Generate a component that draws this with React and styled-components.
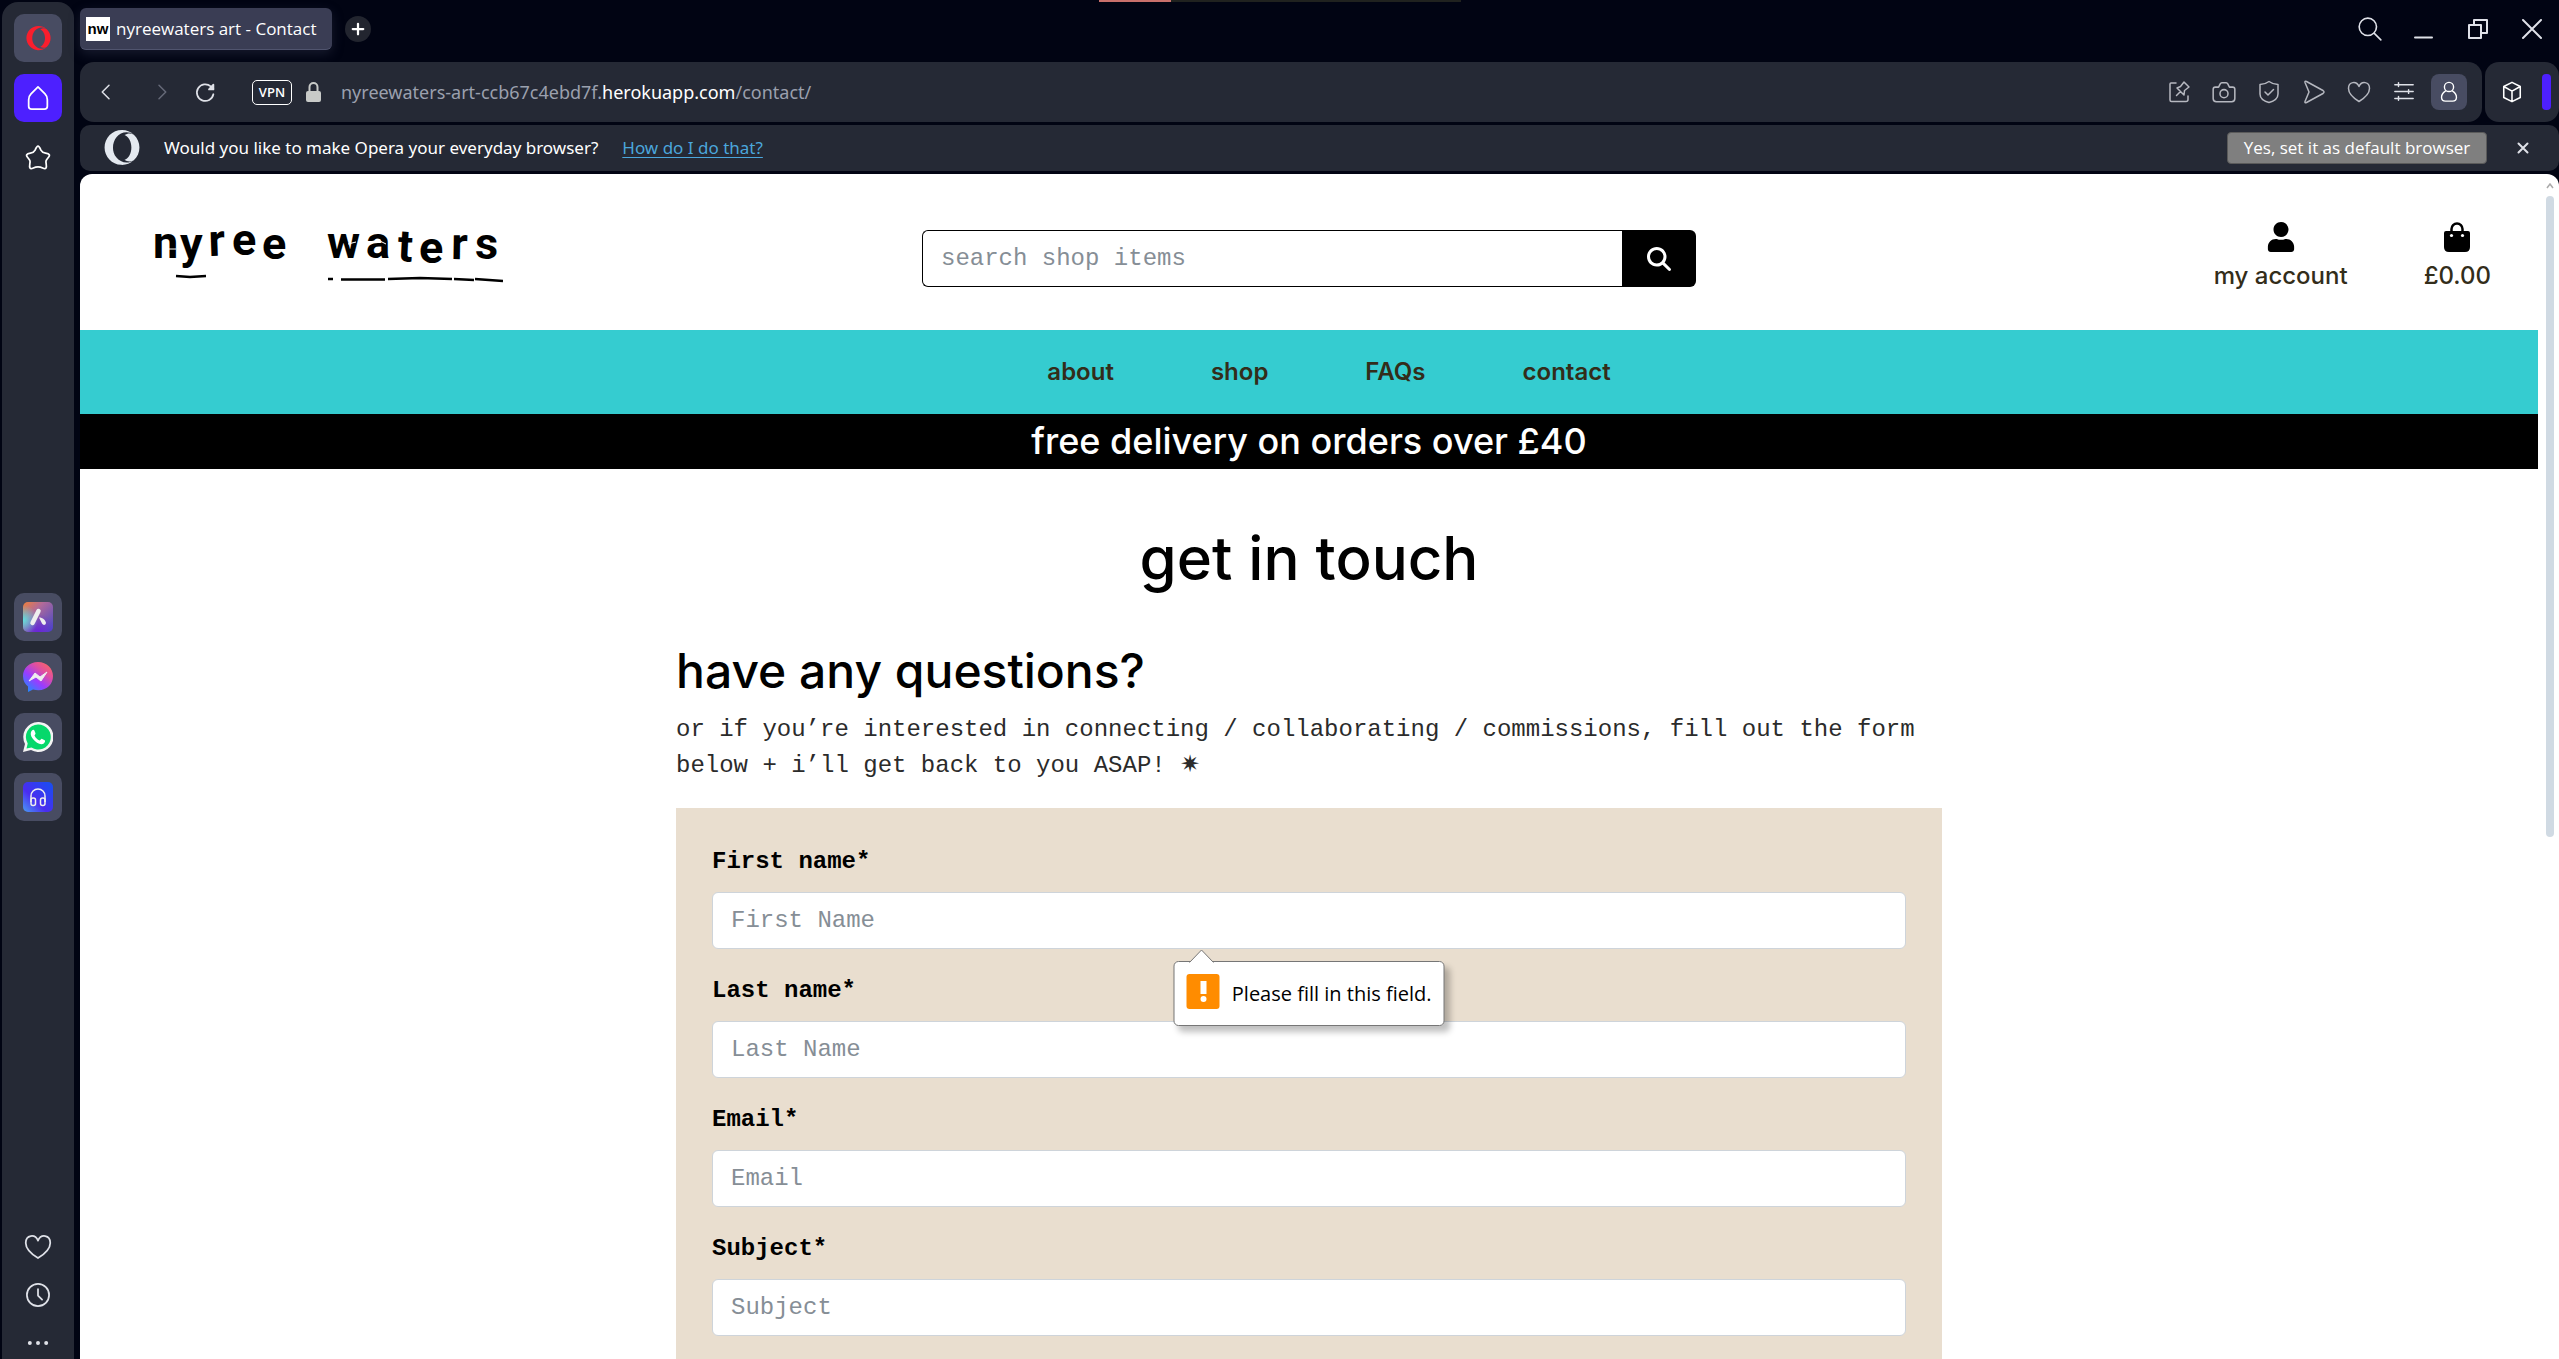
import React from 'react';
import styled, { createGlobalStyle, css } from 'styled-components';
import { FaUser, FaOpera } from 'react-icons/fa';
import { FaMagnifyingGlass } from 'react-icons/fa6';

const ui = "'Open Sans', 'Noto Sans', sans-serif";
const inter = "Inter, 'Liberation Sans', sans-serif";
const mono = "'Liberation Mono', 'DejaVu Sans', monospace";

const GlobalStyle = createGlobalStyle`
  * { box-sizing: border-box; }
  html, body, #root { height: 100%; }
  body { margin: 0; background: #010413; font-family: ${ui}; overflow: hidden; }
  button { padding: 0; border: 0; background: none; color: inherit; font: inherit; }
  a { color: inherit; text-decoration: none; }
`;

const Shell = styled.div`
  display: flex;
  flex-direction: column;
  height: 100vh;
`;

const LoadTrack = styled.div`
  align-self: center;
  width: 362px;
  height: 2px;
  background: linear-gradient(90deg, #c9706b 72px, #20221f 72px);
`;

const Browser = styled.div`
  display: flex;
  flex: 1;
  min-height: 0;
  gap: 6px;
  padding-left: 2px;
  color: #fff;
`;

const Sidebar = styled.aside`
  display: flex;
  flex-direction: column;
  align-items: center;
  flex: none;
  width: 72px;
  padding-top: 12px;
  background: #252935;
  border-radius: 16px 16px 0 0;
`;

const SideGroup = styled.div`
  display: flex;
  flex-direction: column;
  gap: ${p => p.$gap || 12}px;
  ${p => p.$push && css`margin-top: auto;`}
`;

const SideButton = styled.button`
  display: flex;
  align-items: center;
  justify-content: center;
  width: 48px;
  height: 48px;
  border-radius: 10px;
  background: ${p => p.$bg || 'transparent'};
`;

const PlainButton = styled.button`
  display: flex;
  align-items: center;
  justify-content: center;
  width: ${p => p.$size || 36}px;
  height: ${p => p.$size || 36}px;
  border-radius: 8px;
  color: ${p => p.$color || '#dfe1e8'};
  background: ${p => p.$bg || 'transparent'};
`;

const Main = styled.div`
  display: flex;
  flex-direction: column;
  flex: 1;
  min-width: 0;
`;

const TabStrip = styled.div`
  display: flex;
  align-items: center;
  height: 54px;
  padding-right: 9px;
`;

const Tab = styled.div`
  display: flex;
  align-items: center;
  gap: 6px;
  width: 252px;
  height: 42px;
  padding-left: 6px;
  border-radius: 6px;
  border-bottom: 1px solid #50546e;
  background: #3a3d54;
  box-shadow: 0 4px 12px #3a3d5466;
  font-size: 17px;
  white-space: nowrap;
`;

const Favicon = styled.span`
  display: grid;
  place-items: center;
  width: 24px;
  height: 24px;
  background: #fff;
  color: #000;
  font: bold 15px/20px 'Liberation Sans', sans-serif;
`;

const NewTab = styled.button`
  display: grid;
  place-items: center;
  width: 26px;
  height: 26px;
  margin-left: 13px;
  border-radius: 50%;
  background: #22252f;
`;

const WindowControls = styled.div`
  display: flex;
  gap: 18px;
  margin-left: auto;
`;

const ToolRow = styled.div`
  display: flex;
  gap: 3px;
  height: 60px;
  margin-top: 6px;
`;

const Toolbar = styled.div`
  display: flex;
  align-items: center;
  flex: 1;
  gap: 7px;
  padding: 0 15px 0 8px;
  border-radius: 14px;
  background: #252935;
`;

const HistoryButtons = styled.div`
  display: flex;
  gap: 20px;
`;

const Extension = styled.div`
  display: flex;
  align-items: center;
  justify-content: space-between;
  width: 74px;
  padding: 0 8px 0 9px;
  border-radius: 14px;
  background: #252935;
`;

const Handle = styled.span`
  width: 9px;
  height: 36px;
  border-radius: 4px;
  background: #4d20ff;
`;

const Vpn = styled.button`
  width: 40px;
  height: 25px;
  margin-left: 22px;
  margin-right: 7px;
  border: 1px solid #fff;
  border-radius: 5px;
  font-size: 13px;
  font-weight: 600;
  line-height: 20px;
`;

const Address = styled.span`
  display: flex;
  align-items: center;
  gap: 20px;
  font: 18px/24px 'Noto Sans', sans-serif;
  color: #9ba0ae;
  b { font-weight: 400; color: #fff; }
`;

const Tools = styled.div`
  display: flex;
  gap: 9px;
  margin-left: auto;
`;

const Notice = styled.div`
  display: flex;
  align-items: center;
  height: 46px;
  margin-top: 3px;
  padding: 0 18px 0 24px;
  border-radius: 10px;
  background: #252935;
  font: 17px/24px 'Noto Sans', sans-serif;
`;

const NoticeText = styled.span`
  margin-left: 24px;
`;

const NoticeLink = styled.a`
  margin-left: 24px;
  color: #4ba6dc;
  text-decoration: underline;
  text-underline-offset: 3px;
`;

const DefaultButton = styled.button`
  width: 260px;
  height: 32px;
  margin-left: auto;
  margin-right: 18px;
  border: 1px solid #5a5a5a;
  border-radius: 4px;
  background: #7f7f7f;
  font: 17px/24px ${ui};
`;

const Viewport = styled.div`
  display: flex;
  flex: 1;
  min-height: 0;
  margin-top: 3px;
  border-radius: 12px 12px 0 0;
  background: #fff;
  color: #000;
  overflow: hidden;
`;

const Page = styled.div`
  flex: 1;
  min-width: 0;
  overflow: hidden;
`;

const Scrollbar = styled.div`
  display: flex;
  flex-direction: column;
  align-items: center;
  width: 21px;
  padding: 8px 4px 0 6px;
`;

const Thumb = styled.span`
  width: 8px;
  height: 641px;
  margin-top: 6px;
  border-radius: 4px;
  background: #d0dae3;
`;

const SiteHeader = styled.header`
  display: grid;
  grid-template-columns: 1fr 774px 1fr;
  align-items: center;
  height: 156px;
  padding: 0 47px;
`;

const Search = styled.form`
  display: flex;
  height: 57px;
  margin-top: 13px;
`;

const SearchInput = styled.input`
  flex: 1;
  min-width: 0;
  padding: 0 18px;
  border: 1px solid #000;
  border-right: 0;
  border-radius: 6px 0 0 6px;
  background: #fff;
  font: 24px/36px ${mono};
  &::placeholder { color: #868e96; opacity: 1; }
`;

const SearchButton = styled.button`
  display: grid;
  place-items: center;
  width: 74px;
  border-radius: 0 6px 6px 0;
  background: #000;
  color: #fff;
`;

const Account = styled.div`
  display: flex;
  justify-content: flex-end;
  gap: 76px;
  margin-top: 12px;
`;

const AccountLink = styled.a`
  display: flex;
  flex-direction: column;
  align-items: center;
  gap: 6px;
  color: #332d1a;
  font: 500 24px/36px ${inter};
  svg { color: #000; }
`;

const Nav = styled.nav`
  display: flex;
  align-items: center;
  justify-content: center;
  gap: 97px;
  height: 84px;
  padding-left: 40px;
  background: #35ccd0;
  color: #332d1a;
  font: 600 24px/36px ${inter};
`;

const Banner = styled.p`
  margin: 0;
  background: #000;
  color: #fff;
  text-align: center;
  font: 500 36px/55px ${inter};
`;

const Content = styled.main`
  max-width: 1266px;
  margin: 0 auto;
`;

const Title = styled.h1`
  margin: 53px 0 48px;
  text-align: center;
  font: 500 60px/72px ${inter};
`;

const Subtitle = styled.h2`
  margin: 0 0 13px;
  font: 500 48px/57px ${inter};
`;

const Intro = styled.p`
  margin: 0 0 24px;
  color: #2b2b2b;
  font: 24px/36px ${mono};
`;

const ContactForm = styled.form`
  display: flex;
  flex-direction: column;
  gap: 24px;
  padding: 36px;
  background: #e9decf;
`;

const Field = styled.div`
  position: relative;
  display: flex;
  flex-direction: column;
  gap: 12px;
  label { font: bold 24px/36px ${mono}; }
`;

const FieldInput = styled.input`
  height: 57px;
  padding: 0 18px;
  border: 1px solid #ced4da;
  border-radius: 6px;
  background: #fff;
  font: 24px/36px ${mono};
  &::placeholder { color: #868e96; opacity: 1; }
`;

const Bubble = styled.div`
  position: absolute;
  top: calc(100% + 12px);
  left: 50%;
  z-index: 1;
  display: flex;
  align-items: center;
  gap: 12px;
  width: 271px;
  height: 65px;
  padding: 0 12px;
  transform: translateX(-50%);
  border: 1px solid #767676;
  border-radius: 5px;
  background: #fff;
  box-shadow: 5px 6px 6px #00000040;
  font-size: 20px;
  white-space: nowrap;
`;

const Pointer = styled.svg`
  position: absolute;
  left: 14px;
  top: -13px;
`;

const Alert = styled.span`
  display: grid;
  place-items: center;
  width: 35px;
  height: 35px;
  margin-bottom: 4px;
  border-radius: 3px;
  background: #ff8c00;
`;

const Icon = ({ s = 24, w = 1.5, children }) => (
  <svg width={s} height={s} viewBox="0 0 24 24" fill="none" stroke="currentColor" strokeWidth={w} strokeLinecap="round" strokeLinejoin="round" aria-hidden="true">{children}</svg>
);

const letters = [
  ['n', 23, 58, 0], ['y', 50, 59, 0], ['r', 79, 56, -2], ['e', 102, 55, 0], ['e', 132, 59, 0],
  ['w', 197, 58, 0], ['a', 236, 58, 0], ['t', 267, 61, 3], ['e', 289, 63, 0], ['r', 321, 59, 1], ['s', 345, 59, 0],
];

const Logo = () => (
  <svg width="403" height="100" viewBox="-3 0 403 100" role="img" aria-label="nyree waters">
    <g fontFamily="Roboto, 'Liberation Sans', sans-serif" fontWeight="bold" fontSize="45">
      {letters.map(([c, x, y, r], i) => (
        <text key={i} x={x} y={y} transform={`rotate(${r} ${x} ${y})`}>{c}</text>
      ))}
    </g>
    <path stroke="#fff" strokeWidth="1" fill="none" d="M236 43l12-3 8 4M38 49h8M218 44l8-2" />
    <path stroke="#000" strokeWidth="2.6" fill="none" d="M46 76l14 1 16-1M198 79h5M211 79.500h44M258 79l32-1 32 1M324 79l20 1M345 79l28 2" />
  </svg>
);

const Heart = () => <path d="M12 21.500C8 19 1.500 14.500 1.500 8.500 1.500 1.500 9.500.5 12 6.500c2.500-6 10.500-5 10.500 2C22.500 14.500 16 19 12 21.500z" />;

const fields = [
  ['first', 'First name*', 'First Name'],
  ['last', 'Last name*', 'Last Name'],
  ['email', 'Email*', 'Email'],
  ['subject', 'Subject*', 'Subject'],
];

export default function App() {
  return (
    <Shell>
      <GlobalStyle />
      <LoadTrack />
      <Browser>
        <Sidebar>
          <SideGroup>
            <SideButton $bg="#484c62" aria-label="Opera"><FaOpera size={25} color="#fa1e2d" /></SideButton>
            <SideButton $bg="#4d20ff" aria-label="Home"><Icon s={28}><path d="M12 2.500l6 6c1.500 1.500 2 3 2 5V19q0 2.500-2.500 2.500h-11Q4 21.500 4 19v-5.500c0-2 .5-3.500 2-5z" /></Icon></SideButton>
            <SideButton aria-label="Bookmarks"><Icon s={28}><path d="M12 1.800c1 0 1.500 1 2.500 3.500 1 2 1.500 2.200 4 2.600 3.500.6 4.300 1.600 2 4.100-1.700 2-2 2.500-1.500 5 .6 3.500 0 5-3 3.500-2.500-1.200-5.500-1.200-8 0-3 1.500-3.600 0-3-3.500.5-2.500.2-3-1.500-5-2.300-2.500-1.500-3.500 2-4.100 2.500-.4 3-.6 4-2.600 1-2.500 1.500-3.500 2.500-3.500z" /></Icon></SideButton>
          </SideGroup>
          <SideGroup $push>
            <SideButton $bg="#484c62" aria-label="Aria">
              <svg width="30" height="30" viewBox="0 0 30 30">
                <defs>
                  <linearGradient id="ar" x1="0" y1="0" x2="1" y2="1"><stop stopColor="#f08038" /><stop offset=".35" stopColor="#b06a9a" /><stop offset="1" stopColor="#3f46c8" /></linearGradient>
                  <radialGradient id="ac" cx="0" cy=".6" r=".5"><stop stopColor="#5fe0e0" /><stop offset="1" stopColor="#5fe0e0" stopOpacity="0" /></radialGradient>
                  <radialGradient id="ap" cx=".5" cy="1" r=".6"><stop stopColor="#6a24d8" /><stop offset="1" stopColor="#6a24d8" stopOpacity="0" /></radialGradient>
                </defs>
                <rect width="30" height="30" rx="5" fill="url(#ar)" /><rect width="30" height="30" rx="5" fill="url(#ap)" /><rect width="30" height="30" rx="5" fill="url(#ac)" />
                <path d="M15.500 9l-6 12" stroke="#eee" strokeWidth="4.500" strokeLinecap="round" /><path d="M16 15.500c4 0 6.500 2.500 7 5.500-.5 2.500-3 2.500-4 .5z" fill="#eee" />
              </svg>
            </SideButton>
            <SideButton $bg="#484c62" aria-label="Messenger">
              <svg width="30" height="30" viewBox="0 0 30 30">
                <defs><linearGradient id="ms" x1="0.100" y1="1" x2=".9" y2="0"><stop stopColor="#1292ff" /><stop offset=".4" stopColor="#9a3cff" /><stop offset=".7" stopColor="#e04fa0" /><stop offset="1" stopColor="#ff6a5a" /></linearGradient></defs>
                <path d="M15 0C6 0 0 6.500 0 14c0 5 2 8 5 10.500V30l5-2.500c12 3 20-4 20-13.500C30 6.500 24 0 15 0z" fill="url(#ms)" />
                <path d="M6 19l6-8 5 4 7-5-6 9-5-4z" fill="#eee" stroke="#eee" strokeLinejoin="round" />
              </svg>
            </SideButton>
            <SideButton $bg="#484c62" aria-label="WhatsApp">
              <svg width="30" height="30" viewBox="0 0 30 30">
                <path d="M15 0a15 15 0 1 1-7 28L0 30l2-8A15 15 0 0 1 15 0z" fill="#f4f4f4" />
                <path d="M15 2.500a12.500 12.500 0 1 1-6.500 23L3.500 26.500l1.200-5A12.500 12.500 0 0 1 15 2.500z" fill="#06d86b" />
                <path d="M9 8.500c1-1 2-.8 2.500.3l1 2.400c.2.800-.8 1.500-1 2.200 1.200 2.500 2.800 4 5.200 5 .8-.3 1.300-1.500 2-1.600l3 1.500c.8.500.3 2.300-.9 3.100C18 23.500 13 21 10 17c-2.500-3-3-6.500-1-8.500z" fill="#fff" />
              </svg>
            </SideButton>
            <SideButton $bg="#484c62" aria-label="Player">
              <svg width="30" height="30" viewBox="0 0 30 30">
                <defs><linearGradient id="pl" x1="0" y1="1" x2="1" y2="0"><stop stopColor="#4a9cf4" /><stop offset=".4" stopColor="#4a2cf0" /><stop offset="1" stopColor="#1550f0" /></linearGradient></defs>
                <rect width="30" height="30" rx="5" fill="url(#pl)" />
                <path d="M8 20v-6a7 7 0 0 1 14 0v6" fill="none" stroke="#eee" strokeWidth="1.500" /><rect x="8" y="16" width="4.500" height="7.500" rx="2" fill="none" stroke="#eee" strokeWidth="1.500" /><rect x="17.500" y="16" width="4.500" height="7.500" rx="2" fill="none" stroke="#eee" strokeWidth="1.500" />
              </svg>
            </SideButton>
          </SideGroup>
          <SideGroup $gap={16} $push>
            <PlainButton $size={32} aria-label="Likes"><Icon s={28}><Heart /></Icon></PlainButton>
            <PlainButton $size={32} aria-label="History"><Icon s={28}><circle cx="12" cy="12" r="9.500" /><path d="M12 7v5.500l3.500 3.500" /></Icon></PlainButton>
            <PlainButton $size={32} aria-label="More"><Icon s={28} w={3.4}><path d="M5 12h.01M12 12h.01M19 12h.01" /></Icon></PlainButton>
          </SideGroup>
        </Sidebar>
        <Main>
          <TabStrip>
            <Tab><Favicon>nw</Favicon>nyreewaters art - Contact</Tab>
            <NewTab aria-label="New tab"><Icon s={18} w={3}><path d="M12 5v14M5 12h14" /></Icon></NewTab>
            <WindowControls>
              <PlainButton aria-label="Search tabs"><Icon s={26}><circle cx="10" cy="10" r="8" /><path d="M16 16l6 6" /></Icon></PlainButton>
              <PlainButton aria-label="Minimise"><Icon w={2}><path d="M3 20.500h17" /></Icon></PlainButton>
              <PlainButton aria-label="Restore"><Icon w={2}><path d="M3 8h12v13H3zM8 8V3h13v13h-6" /></Icon></PlainButton>
              <PlainButton aria-label="Close"><Icon w={2}><path d="M3 3l18 18M21 3L3 21" /></Icon></PlainButton>
            </WindowControls>
          </TabStrip>
          <ToolRow>
            <Toolbar>
              <HistoryButtons>
                <PlainButton aria-label="Back"><Icon s={18} w={2}><path d="M16 3L7 12l9 9" /></Icon></PlainButton>
                <PlainButton aria-label="Forward" $color="#666a78"><Icon s={18} w={2}><path d="M8 3l9 9-9 9" /></Icon></PlainButton>
              </HistoryButtons>
              <PlainButton aria-label="Reload"><Icon s={21} w={2}><path d="M21 14A9.500 9.500 0 1 1 18 5l3 3" /><path d="M21 3v5.500h-5z" fill="currentColor" /></Icon></PlainButton>
              <Vpn>VPN</Vpn>
              <Address>
                <svg width="15" height="20" viewBox="0 0 15 20" aria-hidden="true"><path d="M3.500 10V5a4 4 0 0 1 8 0v5" fill="none" stroke="#c8cac8" strokeWidth="2" /><rect y="9" width="15" height="11" rx="2" fill="#c8cac8" /></svg>
                <span>nyreewaters-art-ccb67c4ebd7f.<b>herokuapp.com</b>/contact/</span>
              </Address>
              <Tools>
                <PlainButton aria-label="Edit page" $color="#b6b8c0"><Icon><path d="M9 3H4q-1 0-1 1v16q0 1.500 1.500 1.500H19q2 0 2-2V16M9.500 15.500l4-4M10 8l7 7 .5-4.500L22 7l-5-5-3.500 4.500z" /></Icon></PlainButton>
                <PlainButton aria-label="Snapshot" $color="#b6b8c0"><Icon s={26} w={1.4}><path d="M4 7.500h3l1.500-3q.5-1 1.500-1h4q1 0 1.500 1l1.500 3h3q2 0 2 2v8.500q0 3-3 3H5q-3 0-3-3V9.500q0-2 2-2z" /><circle cx="12" cy="13.500" r="3.700" /></Icon></PlainButton>
                <PlainButton aria-label="Ad blocker" $color="#b6b8c0"><Icon><path d="M12 1.500q4 3 9 3V14q0 6-9 8.500Q3 20 3 14V4.500q5 0 9-3zM8 12l3 3 5.500-5.500" /></Icon></PlainButton>
                <PlainButton aria-label="Send" $color="#b6b8c0"><Icon><path d="M3 2.500q-.5-2 1.500-1l16.500 9q2 1.500 0 3l-16.500 9q-2 1-1.500-1L7 12z" /></Icon></PlainButton>
                <PlainButton aria-label="Like" $color="#b6b8c0"><Icon><Heart /></Icon></PlainButton>
                <PlainButton aria-label="Easy setup"><Icon s={22} w={1.6}><path d="M2 4h20M2 11.500h20M2 19h20M6 2v4M17 9.500v4M6 17v4" /></Icon></PlainButton>
                <PlainButton aria-label="Profile" $bg="#484c62" $color="#fff"><Icon s={22}><circle cx="12" cy="6.500" r="5" /><path d="M8 11c-6 4-5 11 0 11h8c5 0 6-7 0-11" /></Icon></PlainButton>
              </Tools>
            </Toolbar>
            <Extension>
              <PlainButton aria-label="Extensions" $color="#fff"><Icon s={22} w={1.7}><path d="M12 1.500l9 4.500v12l-9 4.500L3 18V6zM3 6l9 5 9-5M12 11v11" /></Icon></PlainButton>
              <Handle />
            </Extension>
          </ToolRow>
          <Notice>
            <FaOpera size={36} color="#e4e9f0" />
            <NoticeText>Would you like to make Opera your everyday browser?</NoticeText>
            <NoticeLink href="#help">How do I do that?</NoticeLink>
            <DefaultButton>Yes, set it as default browser</DefaultButton>
            <PlainButton aria-label="Dismiss"><Icon s={12} w={4}><path d="M3 3l18 18M21 3L3 21" /></Icon></PlainButton>
          </Notice>
          <Viewport>
            <Page>
              <SiteHeader>
                <a href="#home"><Logo /></a>
                <Search>
                  <SearchInput aria-label="Search shop items" placeholder="search shop items" />
                  <SearchButton type="button" aria-label="Search"><FaMagnifyingGlass size={24} /></SearchButton>
                </Search>
                <Account>
                  <AccountLink href="#account"><FaUser size={30} />my account</AccountLink>
                  <AccountLink href="#bag">
                    <svg width="26" height="30" viewBox="0 0 26 30" aria-hidden="true">
                      <path d="M7.500 12V7a5.500 5.500 0 0 1 11 0v5" fill="none" stroke="#000" strokeWidth="2.500" />
                      <path d="M2 9h22q2 0 2 2v14q0 5-5 5H5q-5 0-5-5V11q0-2 2-2z" /><circle cx="7.500" cy="13.500" r="1.600" fill="#fff" /><circle cx="18.500" cy="13.500" r="1.600" fill="#fff" />
                    </svg>
                    £0.00
                  </AccountLink>
                </Account>
              </SiteHeader>
              <Nav>
                <a href="#about">about</a><a href="#shop">shop</a><a href="#faqs">FAQs</a><a href="#contact">contact</a>
              </Nav>
              <Banner>free delivery on orders over £40</Banner>
              <Content>
                <Title>get in touch</Title>
                <Subtitle>have any questions?</Subtitle>
                <Intro>or if you’re interested in connecting / collaborating / commissions, fill out the form below + i’ll get back to you ASAP! ✷</Intro>
                <ContactForm>
                  {fields.map(([id, label, hint], i) => (
                    <Field key={id}>
                      <label htmlFor={id}>{label}</label>
                      <FieldInput id={id} placeholder={hint} />
                      {i === 0 && (
                        <Bubble role="alert">
                          <Pointer width="26" height="14" viewBox="0 0 26 14"><path d="M1 13.500L13 1l12 12.500" fill="#fff" stroke="#767676" /></Pointer>
                          <Alert><svg width="8" height="22" viewBox="0 0 8 22"><path d="M1 0h6v13H1z" fill="#fff" /><circle cx="4" cy="18" r="3" fill="#fff" /></svg></Alert>
                          Please fill in this field.
                        </Bubble>
                      )}
                    </Field>
                  ))}
                </ContactForm>
              </Content>
            </Page>
            <Scrollbar>
              <svg width="8" height="8" viewBox="0 0 8 8"><path d="M1 6l3-4 3 4" fill="none" stroke="#aaa" strokeWidth="1.500" /></svg>
              <Thumb />
            </Scrollbar>
          </Viewport>
        </Main>
      </Browser>
    </Shell>
  );
}
